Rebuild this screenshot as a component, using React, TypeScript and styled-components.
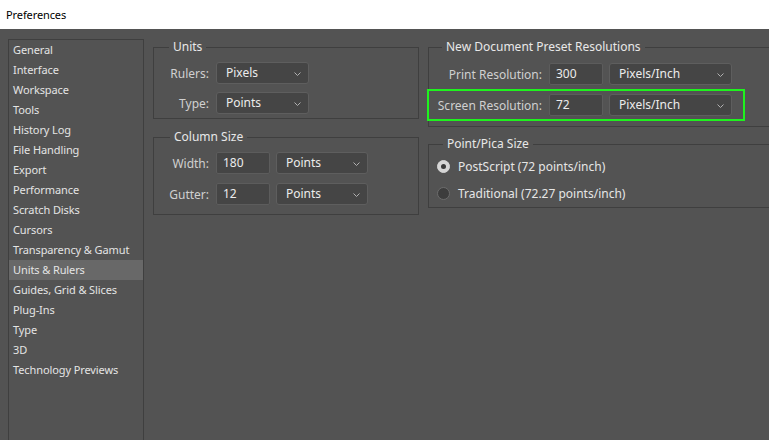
import React from "react";
import styled, { createGlobalStyle } from "styled-components";

const Global = createGlobalStyle`
  html, body { margin: 0; padding: 0; }
  body {
    width: 769px; height: 440px; overflow: hidden;
    font-family: "Noto Sans", "Open Sans", sans-serif;
    font-size: 12px;
    background: #535353;
  }
  * { box-sizing: border-box; }
`;

const Window = styled.div`
  width: 769px;
  height: 440px;
  display: flex;
  flex-direction: column;
  overflow: hidden;
`;

const TitleBar = styled.div`
  height: 29px;
  flex: 0 0 29px;
  background: #ffffff;
  color: #000;
  display: flex;
  align-items: center;
  padding-left: 6px;
  font-size: 11px;
  letter-spacing: -0.1px;
`;

const Body = styled.div`
  flex: 1;
  display: flex;
  background: #535353;
  padding: 10px 0 0 8px;
  overflow: hidden;
`;

const Sidebar = styled.ul`
  list-style: none;
  margin: 0;
  padding: 0;
  width: 136px;
  flex: 0 0 136px;
  border: 1px solid #3f3f3f;
  border-bottom: none;
  height: 420px;
  font-size: 11px;
  letter-spacing: -0.1px;
`;

const NavItem = styled.li<{ $active?: boolean }>`
  height: 20px;
  line-height: 20px;
  padding-left: 4px;
  color: #e4e4e4;
  white-space: nowrap;
  background: ${(p) => (p.$active ? "#686868" : "transparent")};
`;

const Content = styled.div`
  display: flex;
  gap: 9px;
  margin-left: 9px;
  align-items: flex-start;
  flex: 0 0 auto;
`;

const Column = styled.div<{ $w: number; $gap: number }>`
  width: ${(p) => p.$w}px;
  flex: 0 0 ${(p) => p.$w}px;
  display: flex;
  flex-direction: column;
  gap: ${(p) => p.$gap}px;
`;

const Group = styled.fieldset<{ $pl: number; $pt: number; $pb: number; $h: number }>`
  margin: 0;
  border: 1px solid #3f3f3f;
  padding: ${(p) => `${p.$pt}px 0 ${p.$pb}px ${p.$pl}px`};
  height: ${(p) => p.$h}px;
  min-width: 0;
`;

const Legend = styled.legend<{ $lm: number }>`
  margin-left: ${(p) => p.$lm}px;
  padding: 0 4px;
  color: #e8e8e8;
  line-height: 16px;
`;

const FormGrid = styled.div<{ $label: number; $rowGap: number }>`
  display: grid;
  grid-template-columns: ${(p) => p.$label}px auto auto;
  column-gap: 6px;
  row-gap: ${(p) => p.$rowGap}px;
  align-items: center;
  justify-content: start;
`;

const Label = styled.span`
  justify-self: end;
  color: #d0d0d0;
  white-space: nowrap;
  margin-right: 1px;
`;

const Field = styled.div`
  height: 22px;
  width: 54px;
  background: #454545;
  border: 1px solid #5c5c5c;
  border-radius: 2px;
  color: #ececec;
  padding-left: 6px;
  line-height: 20px;
`;

const Select = styled.div<{ $w: number }>`
  position: relative;
  height: 22px;
  width: ${(p) => p.$w}px;
  background: #454545;
  border: 1px solid #5e5e5e;
  border-radius: 3px;
  color: #ececec;
  padding-left: 9px;
  line-height: 20px;
`;

const Chevron = styled.svg`
  position: absolute;
  right: 7px;
  top: 9px;
`;

const HighlightRow = styled.div`
  position: relative;
  grid-column: 1 / -1;
  display: grid;
  grid-template-columns: subgrid;
  align-items: center;
  &::after {
    content: "";
    position: absolute;
    top: -5px;
    bottom: -5px;
    left: -12px;
    right: -13px;
    border: 2px solid #1ef21e;
    pointer-events: none;
  }
`;

const RadioList = styled.div`
  display: flex;
  flex-direction: column;
  gap: 11px;
`;

const RadioRow = styled.div`
  display: flex;
  align-items: center;
  gap: 8px;
  color: #e6e6e6;
  height: 16px;
`;

const RadioDot = styled.span<{ $checked?: boolean }>`
  width: 13px;
  height: 13px;
  border-radius: 50%;
  flex: 0 0 13px;
  display: flex;
  align-items: center;
  justify-content: center;
  background: ${(p) => (p.$checked ? "#d6d6d6" : "#3d3d3d")};
  border: 1px solid ${(p) => (p.$checked ? "#d6d6d6" : "#6c6c6c")};
  &::after {
    content: "";
    width: 5px;
    height: 5px;
    border-radius: 50%;
    background: ${(p) => (p.$checked ? "#3a3a3a" : "transparent")};
  }
`;

const Drop = ({ w, children }: { w: number; children: React.ReactNode }) => (
  <Select $w={w}>
    {children}
    <Chevron width="7" height="4" viewBox="0 0 7 4">
      <path d="M0.5 0.5 L3.5 3.5 L6.5 0.5" fill="none" stroke="#b0b0b0" strokeWidth="1" />
    </Chevron>
  </Select>
);

const navItems = [
  "General",
  "Interface",
  "Workspace",
  "Tools",
  "History Log",
  "File Handling",
  "Export",
  "Performance",
  "Scratch Disks",
  "Cursors",
  "Transparency & Gamut",
  "Units & Rulers",
  "Guides, Grid & Slices",
  "Plug-Ins",
  "Type",
  "3D",
  "Technology Previews",
];

export default function App() {
  return (
    <>
      <Global />
      <Window>
        <TitleBar>Preferences</TitleBar>
        <Body>
          <Sidebar>
            {navItems.map((n) => (
              <NavItem key={n} $active={n === "Units & Rulers"}>
                {n}
              </NavItem>
            ))}
          </Sidebar>
          <Content>
            <Column $w={266} $gap={10}>
              <Group $pl={14} $pt={7} $pb={5} $h={80}>
                <Legend $lm={1}>Units</Legend>
                <FormGrid $label={42} $rowGap={8}>
                  <Label>Rulers:</Label>
                  <Drop w={93}>Pixels</Drop>
                  <span />
                  <Label>Type:</Label>
                  <Drop w={93}>Points</Drop>
                  <span />
                </FormGrid>
              </Group>
              <Group $pl={14} $pt={7} $pb={5} $h={86}>
                <Legend $lm={2}>Column Size</Legend>
                <FormGrid $label={42} $rowGap={9}>
                  <Label>Width:</Label>
                  <Field>180</Field>
                  <Drop w={92}>Points</Drop>
                  <Label>Gutter:</Label>
                  <Field>12</Field>
                  <Drop w={92}>Points</Drop>
                </FormGrid>
              </Group>
            </Column>
            <Column $w={370} $gap={9}>
              <Group $pl={10} $pt={8} $pb={5} $h={88}>
                <Legend $lm={3}>New Document Preset Resolutions</Legend>
                <FormGrid $label={104} $rowGap={9}>
                  <Label>Print Resolution:</Label>
                  <Field>300</Field>
                  <Drop w={123}>Pixels/Inch</Drop>
                  <HighlightRow>
                    <Label>Screen Resolution:</Label>
                    <Field>72</Field>
                    <Drop w={123}>Pixels/Inch</Drop>
                  </HighlightRow>
                </FormGrid>
              </Group>
              <Group $pl={8} $pt={6} $pb={5} $h={72}>
                <Legend $lm={6}>Point/Pica Size</Legend>
                <RadioList>
                  <RadioRow>
                    <RadioDot $checked />
                    PostScript (72 points/inch)
                  </RadioRow>
                  <RadioRow>
                    <RadioDot />
                    Traditional (72.27 points/inch)
                  </RadioRow>
                </RadioList>
              </Group>
            </Column>
          </Content>
        </Body>
      </Window>
    </>
  );
}
